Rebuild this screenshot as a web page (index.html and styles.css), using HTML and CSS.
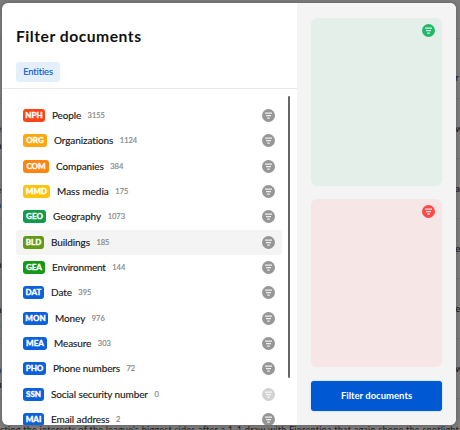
FILE: index.html
```html
<!DOCTYPE html>
<html lang="en">
<head>
<meta charset="utf-8">
<title>Filter documents</title>
<link rel="stylesheet" href="styles.css">
</head>
<body>
<svg class="defs"><symbol id="filter" viewBox="0 0 13 13"><circle cx="6.5" cy="6.5" r="6.5" fill="currentColor"/><path d="M3 4.1h7M4 6.6h5M5.2 9.1h2.6" stroke="#fff" stroke-width="1.4" opacity=".85"/></symbol></svg>
<div class="edge left"><span>e</span><span>n</span><span>e</span><span>a</span><span>n</span><span>n</span><span class="link">s</span><span>a</span><span>u</span></div>
<div class="edge right"><span>r</span><span>w</span><span>ap</span><span>e</span><span>e</span><span>w</span></div>
<p class="article-line">cting the interests of the league's biggest sides after a 1-1 draw with Fiorentina that again shone the spotlight</p>
<main class="modal">
  <section class="picker">
    <header class="head"><h1>Filter documents</h1><span class="tab">Entities</span></header>
    <div class="scroller">
      <ul class="list">
        <li class="row nph"><b class="tag">NPH</b><span class="name">People</span><span class="count">3155</span><svg class="ico"><use href="#filter"/></svg></li>
        <li class="row org"><b class="tag">ORG</b><span class="name">Organizations</span><span class="count">1124</span><svg class="ico"><use href="#filter"/></svg></li>
        <li class="row com"><b class="tag">COM</b><span class="name">Companies</span><span class="count">384</span><svg class="ico"><use href="#filter"/></svg></li>
        <li class="row mmd"><b class="tag">MMD</b><span class="name">Mass media</span><span class="count">175</span><svg class="ico"><use href="#filter"/></svg></li>
        <li class="row geo"><b class="tag">GEO</b><span class="name">Geography</span><span class="count">1073</span><svg class="ico"><use href="#filter"/></svg></li>
        <li class="row bld active"><b class="tag">BLD</b><span class="name">Buildings</span><span class="count">185</span><svg class="ico"><use href="#filter"/></svg></li>
        <li class="row gea"><b class="tag">GEA</b><span class="name">Environment</span><span class="count">144</span><svg class="ico"><use href="#filter"/></svg></li>
        <li class="row dat"><b class="tag">DAT</b><span class="name">Date</span><span class="count">395</span><svg class="ico"><use href="#filter"/></svg></li>
        <li class="row mon"><b class="tag">MON</b><span class="name">Money</span><span class="count">976</span><svg class="ico"><use href="#filter"/></svg></li>
        <li class="row mea"><b class="tag">MEA</b><span class="name">Measure</span><span class="count">303</span><svg class="ico"><use href="#filter"/></svg></li>
        <li class="row pho"><b class="tag">PHO</b><span class="name">Phone numbers</span><span class="count">72</span><svg class="ico"><use href="#filter"/></svg></li>
        <li class="row ssn"><b class="tag">SSN</b><span class="name">Social security number</span><span class="count">0</span><svg class="ico off"><use href="#filter"/></svg></li>
        <li class="row mai"><b class="tag">MAI</b><span class="name">Email address</span><span class="count">2</span><svg class="ico"><use href="#filter"/></svg></li>
      </ul>
      <div class="bar"></div>
    </div>
  </section>
  <aside class="side">
    <div class="zone include"><svg class="ico"><use href="#filter"/></svg></div>
    <div class="zone exclude"><svg class="ico"><use href="#filter"/></svg></div>
    <button class="apply">Filter documents</button>
  </aside>
</main>
</body>
</html>
```
FILE: styles.css
```css
* { box-sizing: border-box; }
body { margin: 0; width: 460px; height: 430px; padding: 3px 4px 0 2px; overflow: hidden; background: repeating-linear-gradient(#7c7c7c 0 38px, #737373 38px 39px, #7c7c7c 39px 60px); font-family: Lato, sans-serif; color: #191919; }
.defs { position: absolute; width: 0; height: 0; }
.article-line { position: absolute; left: 0; top: 424px; width: 460px; height: 12px; margin: 0; font-size: 9.2px; letter-spacing: .18px; line-height: 12px; white-space: nowrap; color: #222; }
/* article text showing on both sides of the dialog */
.edge { position: absolute; top: 0; width: 6px; height: 424px; display: grid; align-content: start; font-size: 10px; font-weight: 700; line-height: 12px; color: #2a2a2a; }
.left { left: -4px; padding-top: 122px; grid-template-rows: 17px 44px 15px 60px 45px 15px 45px 15px 15px; }
.right { left: 455px; padding-top: 71px; grid-template-rows: 51px repeat(5, 60px); }
.link { color: #124a86; }
.modal { position: relative; display: flex; width: 454px; height: 422px; border-radius: 6px; overflow: hidden; background: #fff; box-shadow: 0 0 4px rgba(0,0,0,.25); }
.picker { width: 295px; display: flex; flex-direction: column; }
.head { height: 86px; flex: none; padding: 22px 14px 0; border-bottom: 1px solid #ebebeb; }
h1 { margin: 0; font-size: 15.7px; line-height: 22px; font-weight: 700; letter-spacing: .5px; color: #111; }
.tab { display: inline-flex; align-items: center; justify-content: center; width: 44px; height: 20px; margin-top: 15px; padding-bottom: 1px; border-radius: 3px; background: #e3f0fb; color: #0b5bd3; font-size: 9.3px; letter-spacing: -.1px; -webkit-text-stroke: .15px; }
.scroller { display: flex; flex: 1; min-height: 0; overflow: hidden; padding: 7px 7px 0 14px; }
.list { list-style: none; width: 266px; margin: 7px 0 0; padding: 0; }
.row { display: flex; align-items: center; height: 25.33px; padding: 0 7px; border-radius: 3px; }
.active { background: #f4f4f4; }
.tag { display: flex; flex: none; align-items: center; justify-content: center; height: 13px; width: 22px; border-radius: 3px; background: #0b60dc; color: #fff; font-size: 8px; line-height: 13px; font-weight: 900; -webkit-text-stroke: .3px; }
.name { margin-left: 7px; font-size: 10px; letter-spacing: -.1px; white-space: nowrap; -webkit-text-stroke: .15px; }
.count { margin-left: 6.5px; font-size: 7.5px; letter-spacing: 0; color: #888; -webkit-text-stroke: .2px; }
.ico { display: block; flex: none; width: 13px; height: 13px; margin-left: auto; color: #969696; }
.off { color: #d2d2d2; }
.bar { width: 2px; height: 282px; margin-left: 6px; background: #666; border-radius: 1px; }
.nph .tag { background: #ff4218; }
.nph .name { letter-spacing: -.15px; }
.org .tag { background: #ffa70d; width: 24px; }
.com .tag { background: #ff850d; width: 26px; }
.mmd .tag { background: #fcc40c; width: 27px; }
.mmd .name { letter-spacing: 0; }
.geo .tag { background: #119b4b; width: 23px; }
.geo .name { letter-spacing: 0; }
.bld .tag { background: #629917; width: 21px; }
.gea .tag { background: #149a15; }
.gea .name { letter-spacing: -.2px; }
.dat .tag, .ssn .tag, .mai .tag { width: 21px; }
.mon .tag { width: 25px; }
.mea .tag { width: 24px; }
.pho .tag { width: 23px; }
.pho .name { letter-spacing: -.15px; }
.row .name, .row .count { padding-bottom: 1px; }
.row .count { padding-bottom: 0; }
.side { flex: 1; padding: 15px 14px 0; background: #f4f4f4; display: flex; flex-direction: column; }
.zone { height: 168px; margin-bottom: 13px; padding: 6px 7px; border-radius: 6px; }
.include { background: #e3efe8; }
.include .ico { color: #20b969; }
.exclude { background: #f6e6e5; margin-bottom: 14px; }
.exclude .ico { color: #fc4a4a; }
.apply { height: 30px; padding: 0 0 1px; border: 0; border-radius: 3px; background: #0058d3; color: #fff; font: 700 9.5px Lato, sans-serif; box-shadow: 0 0 2px #8ed0f5; }
```
